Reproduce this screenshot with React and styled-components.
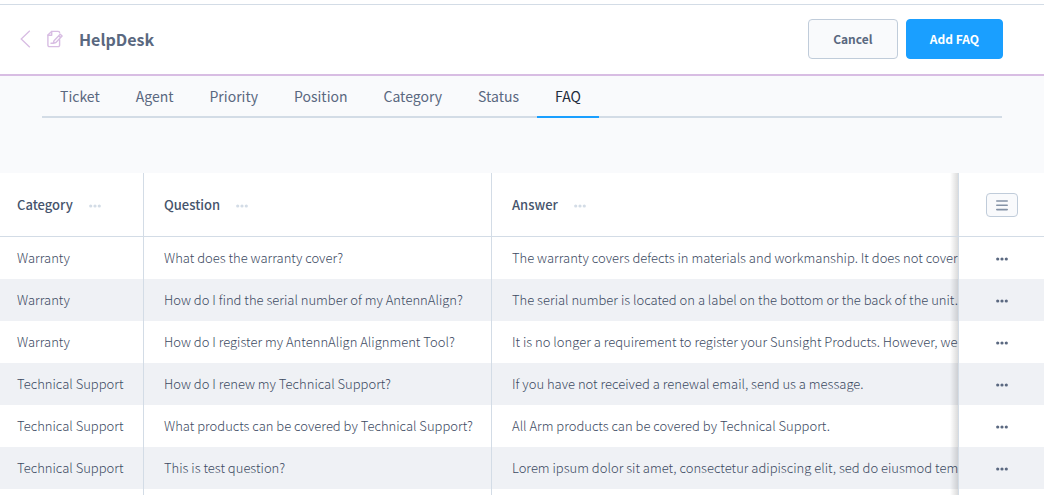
import React from 'react';
import styled, { createGlobalStyle, css } from 'styled-components';

const GlobalStyle = createGlobalStyle`
  * { box-sizing: border-box; }
  body {
    margin: 0;
    background: #ffffff;
    color: #5a6880;
    font-family: "Noto Sans CJK SC", "Open Sans", sans-serif;
    font-size: 13px;
    line-height: 20px;
  }
  button { font: inherit; color: inherit; cursor: pointer; }
`;

const Page = styled.div`
  display: flex;
  flex-direction: column;
  height: 100vh;
  overflow: hidden;
  padding-top: 4px;
`;

const Header = styled.header`
  flex: none;
  display: flex;
  align-items: center;
  height: 72px;
  padding: 0 41px 2px 18px;
  border-top: 1px solid #d3dce6;
  border-bottom: 2px solid #d8bde3;
`;

const BackButton = styled.button`
  display: flex;
  padding: 0;
  margin-right: 13px;
  border: 0;
  background: none;
  color: #d8bde3;
`;

const AppIcon = styled.span`
  display: flex;
  margin-right: 16px;
  color: #d8bde3;
`;

const Title = styled.h1`
  flex: 1;
  margin: 0;
  font-size: 16px;
  font-weight: 700;
  line-height: 24px;
  color: #5a6880;
`;

const Button = styled.button`
  height: 40px;
  min-width: 90px;
  padding: 0 23px;
  margin-left: 8px;
  border: 1px solid ${(p) => (p.$primary ? '#1a9fff' : '#c0ccda')};
  border-radius: 4px;
  background: ${(p) => (p.$primary ? '#1a9fff' : '#f9fafc')};
  color: ${(p) => (p.$primary ? '#ffffff' : '#5a6880')};
  font-size: 12px;
  font-weight: 700;
`;

const TabBar = styled.div`
  flex: none;
  height: 97px;
  padding: 0 42px;
  background: #f9fafc;
`;

const Tabs = styled.nav`
  display: flex;
  height: 42px;
  border-bottom: 2px solid #d3dce6;
`;

const Tab = styled.a`
  height: 42px;
  padding: 0 18px;
  border-bottom: 2px solid ${(p) => (p.$active ? '#1a9fff' : 'transparent')};
  color: ${(p) => (p.$active ? '#1f2d3d' : '#5a6880')};
  font-size: 14px;
  line-height: 40px;
  text-decoration: none;
`;

const Table = styled.table`
  width: 100%;
  table-layout: fixed;
  border-collapse: separate;
  border-spacing: 0;
  color: #3c4a62;
  font-weight: 300;
`;

const Col = styled.col`
  width: ${(p) => p.$width};
`;

const cell = css`
  padding: 0 0 0 20px;
  overflow: hidden;
  white-space: nowrap;
  text-align: left;
  border-right: 1px solid #d3dce6;

  &:first-child { padding-left: 17px; }
  &:nth-child(3) { border-right: 0; }
  &:last-child {
    position: relative;
    overflow: visible;
    padding: 0;
    border-left: 1px solid #d3dce6;
    border-right: 0;
    text-align: center;
  }
  &:last-child::before {
    content: "";
    position: absolute;
    top: 0;
    bottom: 0;
    right: 100%;
    width: 8px;
    margin-right: 1px;
    background: linear-gradient(to left, rgba(0, 0, 0, 0.14), rgba(0, 0, 0, 0));
  }
`;

const HeadCell = styled.th`
  ${cell}
  height: 64px;
  border-bottom: 1px solid #d3dce6;
  color: #46546c;
  font-weight: 500;
`;

const Row = styled.tr`
  height: 42px;
  background: ${(p) => (p.$shaded ? '#eff1f5' : '#ffffff')};
`;

const Cell = styled.td`
  ${cell}
`;

const DotsButton = styled.button`
  display: inline-flex;
  padding: 4px 0;
  margin-left: ${(p) => (p.$muted ? '16px' : '0')};
  border: 0;
  background: none;
  vertical-align: middle;
  color: ${(p) => (p.$muted ? '#d3dce6' : '#5a6880')};
`;

const MenuButton = styled.button`
  display: inline-flex;
  align-items: center;
  justify-content: center;
  width: 32px;
  height: 24px;
  padding: 0;
  border: 1px solid #c0ccda;
  border-radius: 4px;
  background: #f9fafc;
  color: #8492a6;
  vertical-align: middle;
`;

const Dots = () => (
  <svg width="12" height="4" viewBox="0 0 12 4" fill="currentColor" aria-hidden="true">
    <circle cx="1.7" cy="2" r="1.6" />
    <circle cx="6" cy="2" r="1.6" />
    <circle cx="10.3" cy="2" r="1.6" />
  </svg>
);

const TABS = ['Ticket', 'Agent', 'Priority', 'Position', 'Category', 'Status', 'FAQ'];
const COLUMNS = ['Category', 'Question', 'Answer'];
const ROWS = [
  ['Warranty', 'What does the warranty cover?', 'The warranty covers defects in materials and workmanship. It does not cover'],
  ['Warranty', 'How do I find the serial number of my AntennAlign?', 'The serial number is located on a label on the bottom or the back of the unit.'],
  ['Warranty', 'How do I register my AntennAlign Alignment Tool?', 'It is no longer a requirement to register your Sunsight Products. However, we'],
  ['Technical Support', 'How do I renew my Technical Support?', 'If you have not received a renewal email, send us a message.'],
  ['Technical Support', 'What products can be covered by Technical Support?', 'All Arm products can be covered by Technical Support.'],
  ['Technical Support', 'This is test question?', 'Lorem ipsum dolor sit amet, consectetur adipiscing elit, sed do eiusmod tem'],
];

export default function App() {
  return (
    <Page>
      <GlobalStyle />
      <Header>
        <BackButton aria-label="Back">
          <svg width="16" height="18" viewBox="0 0 16 18" fill="none" stroke="currentColor" strokeWidth="1.3">
            <path d="M11.8.8 3.2 9l8.6 8.2" />
          </svg>
        </BackButton>
        <AppIcon>
          <svg width="16" height="18" viewBox="0 0 16 18" fill="none" stroke="currentColor" strokeWidth="1.4" strokeLinejoin="round" strokeLinecap="round">
            <path d="M12.6 9.6v5.6a1.4 1.4 0 0 1-1.4 1.4H2.3a1.4 1.4 0 0 1-1.4-1.4V5L4.6 1.4h6.6a1.4 1.4 0 0 1 1.4 1.4" />
            <path d="M1 5.2h3.7V1.5" />
            <path d="m13.2 4.2 1.9 1.8-6.2 6.5-2.6.8.7-2.6zM11.7 5.8l1.8 1.8M4 13.2h2.2" />
          </svg>
        </AppIcon>
        <Title>HelpDesk</Title>
        <Button>Cancel</Button>
        <Button $primary>Add FAQ</Button>
      </Header>
      <TabBar>
        <Tabs>
          {TABS.map((name) => (
            <Tab key={name} href="#" $active={name === 'FAQ'}>{name}</Tab>
          ))}
        </Tabs>
      </TabBar>
      <Table>
        <colgroup>
          <Col $width="144px" />
          <Col $width="348px" />
          <Col $width="auto" />
          <Col $width="86px" />
        </colgroup>
        <thead>
          <tr>
            {COLUMNS.map((name) => (
              <HeadCell key={name}>
                {name}
                <DotsButton $muted aria-label={`${name} options`}><Dots /></DotsButton>
              </HeadCell>
            ))}
            <HeadCell>
              <MenuButton aria-label="Columns">
                <svg width="12" height="12" viewBox="0 0 12 12" stroke="currentColor" strokeWidth="1.6" strokeLinecap="round">
                  <path d="M.8 2h10.4M.8 6.3h10.4M.8 10.6h10.4" />
                </svg>
              </MenuButton>
            </HeadCell>
          </tr>
        </thead>
        <tbody>
          {ROWS.map((row, i) => (
            <Row key={row[1]} $shaded={i % 2 === 1}>
              {row.map((text, j) => <Cell key={j}>{text}</Cell>)}
              <Cell><DotsButton aria-label="Row actions"><Dots /></DotsButton></Cell>
            </Row>
          ))}
          <Row><Cell /><Cell /><Cell /><Cell /></Row>
        </tbody>
      </Table>
    </Page>
  );
}
